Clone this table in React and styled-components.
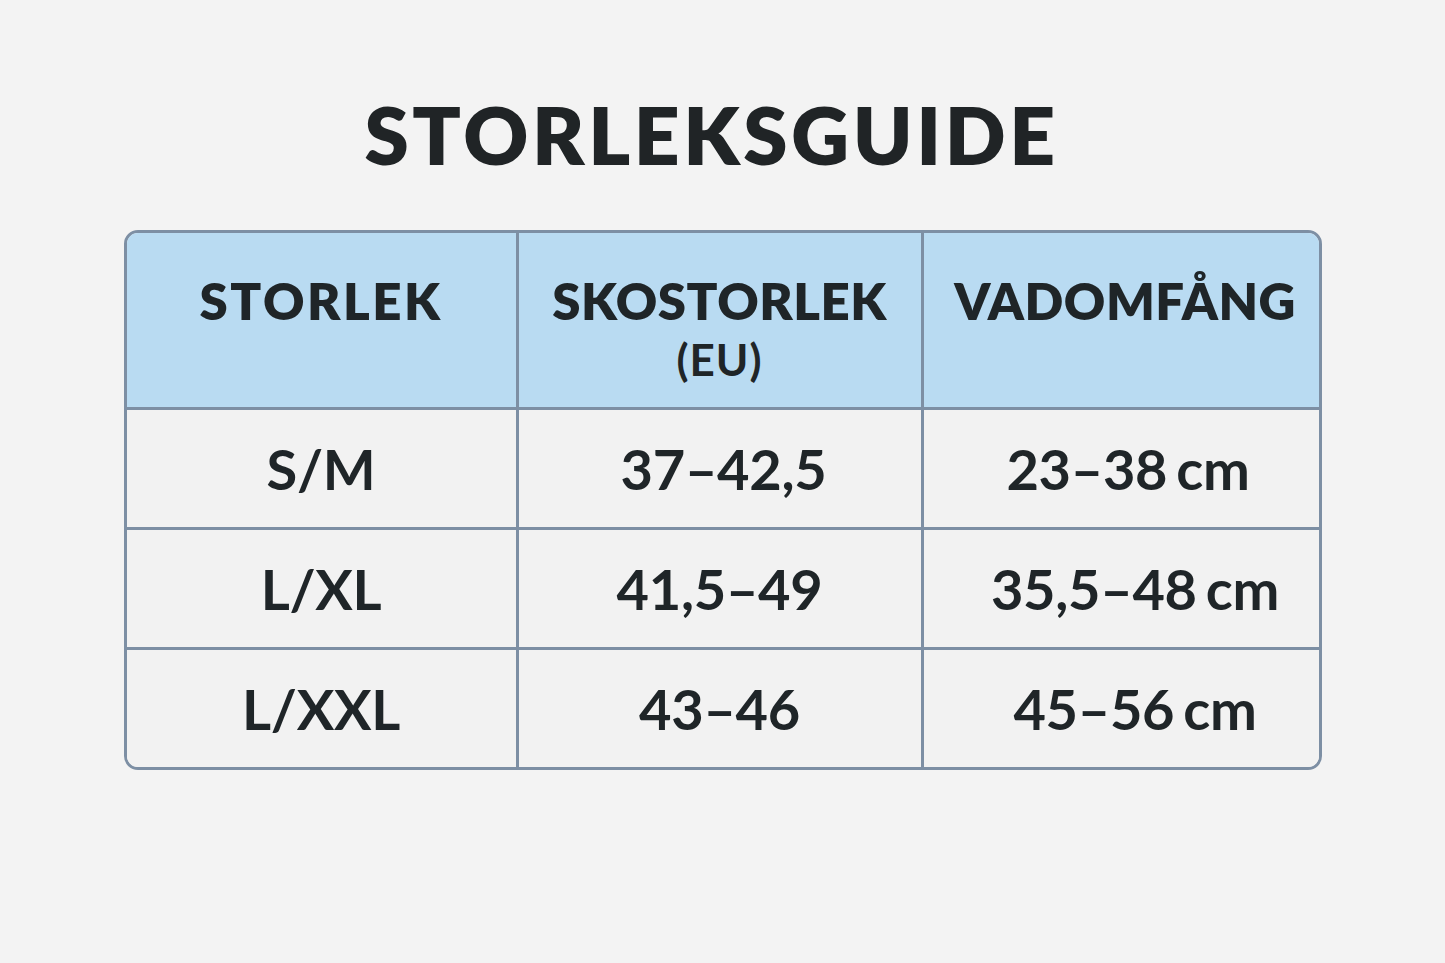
import React from "react";
import styled, { createGlobalStyle } from "styled-components";

const Global = createGlobalStyle`
  html, body {
    margin: 0;
    padding: 0;
    background: #f3f3f3;
  }
  body {
    font-family: "Lato", "Open Sans", "Liberation Sans", sans-serif;
    color: #1f2528;
  }
`;

const Page = styled.div`
  width: 1445px;
  height: 963px;
  display: flex;
  flex-direction: column;
  align-items: center;
  box-sizing: border-box;
  padding-top: 93px;
`;

const Title = styled.h1`
  margin: 0 22px 0 0;
  font-size: 80px;
  font-weight: 800;
  line-height: 82px;
  letter-spacing: 3.6px;
  color: #202426;
`;

const Table = styled.div`
  margin-top: 55px;
  width: 1198px;
  box-sizing: border-box;
  border: 3px solid #7d8fa4;
  border-radius: 14px;
  overflow: hidden;
  display: grid;
  grid-template-columns: 392px 405px 1fr;
  grid-template-rows: 177px 120px 120px 117px;
`;

const Cell = styled.div`
  display: flex;
  flex-direction: column;
  align-items: center;
  justify-content: ${(p) => (p.$head ? "flex-start" : "center")};
  padding-top: ${(p) => (p.$head ? "37px" : "0")};
  padding-left: ${(p) => p.$shift || 0}px;
  background: ${(p) => (p.$head ? "#b9dbf2" : "#f2f2f2")};
  border-right: ${(p) => (p.$last ? "none" : "3px solid #7d8fa4")};
  border-bottom: ${(p) => (p.$bottom ? "none" : "3px solid #7d8fa4")};
  box-sizing: border-box;
`;

const HeadText = styled.div`
  font-size: 51px;
  font-weight: 800;
  letter-spacing: ${(p) => (p.$wide ? "2.5px" : "0.5px")};
  line-height: 62px;
  text-align: center;
`;

const SubText = styled.div`
  margin-top: 2px;
  font-size: 44px;
  font-weight: 700;
  line-height: 50px;
  letter-spacing: 1px;
`;

const BodyText = styled.div`
  font-size: 56px;
  font-weight: 700;
  line-height: 64px;
  letter-spacing: -0.3px;
`;

const Unit = styled.span`
  margin-left: 9px;
  font-weight: 700;
`;

const rows = [
  ["S/M", "37–42,5", "23–38", 8, 14],
  ["L/XL", "41,5–49", "35,5–48", 0, 28],
  ["L/XXL", "43–46", "45–56", 0, 28],
];

export default function App() {
  return (
    <>
      <Global />
      <Page>
        <Title>STORLEKSGUIDE</Title>
        <Table>
          <Cell $head>
            <HeadText $wide>STORLEK</HeadText>
          </Cell>
          <Cell $head>
            <HeadText>SKOSTORLEK</HeadText>
            <SubText>(EU)</SubText>
          </Cell>
          <Cell $head $last $shift={8}>
            <HeadText>VADOMFÅNG</HeadText>
          </Cell>
          {rows.map(([size, shoe, calf, s2, s3], i) => (
            <React.Fragment key={size}>
              <Cell $bottom={i === rows.length - 1}>
                <BodyText>{size}</BodyText>
              </Cell>
              <Cell $bottom={i === rows.length - 1} $shift={s2}>
                <BodyText>{shoe}</BodyText>
              </Cell>
              <Cell $bottom={i === rows.length - 1} $last $shift={s3}>
                <BodyText>
                  {calf}
                  <Unit>cm</Unit>
                </BodyText>
              </Cell>
            </React.Fragment>
          ))}
        </Table>
      </Page>
    </>
  );
}
